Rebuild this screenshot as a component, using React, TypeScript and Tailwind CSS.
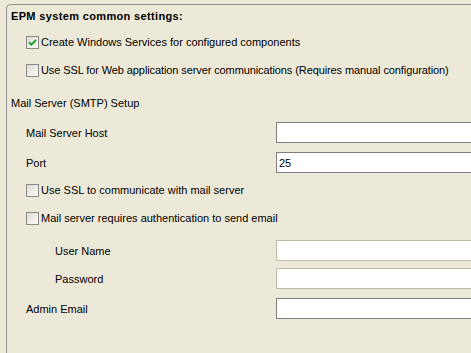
const font = "font-['Tahoma','Liberation_Sans','DejaVu_Sans',sans-serif] text-[11px] text-black";

function CheckBox({ checked = false }: { checked?: boolean }) {
  return (
    <span className="w-[13px] h-[13px] shrink-0 border border-[#8a8a88] bg-gradient-to-br from-[#dcdcd5] to-[#fbfbf9] flex items-center justify-center">
      {checked && (
        <svg width="9" height="9" viewBox="0 0 9 9">
          <path d="M1 4.2 L3.4 6.6 L8 2" fill="none" stroke="#21a121" strokeWidth="2" />
        </svg>
      )}
    </span>
  );
}

function CheckRow({
  label,
  checked,
  mt,
  tight = false,
}: {
  label: string;
  checked?: boolean;
  mt: string;
  tight?: boolean;
}) {
  return (
    <div className={`h-[21px] flex items-center gap-[2px] pl-[19px] ${mt}`}>
      <CheckBox checked={checked} />
      <span className={`whitespace-nowrap ${tight ? "tracking-[-0.1px]" : ""}`}>{label}</span>
    </div>
  );
}

function FieldRow({
  label,
  value = "",
  disabled = false,
  indent = "pl-[19px]",
  mt,
}: {
  label: string;
  value?: string;
  disabled?: boolean;
  indent?: string;
  mt: string;
}) {
  return (
    <div className={`h-[21px] flex items-center ${mt}`}>
      <div className={`w-[269px] shrink-0 pt-[1px] ${indent}`}>{label}</div>
      <div
        className={`h-[21px] flex-1 bg-white border flex items-center px-[2px] pt-[1px] ${
          disabled ? "border-[#bdbaa6]" : "border-[#7f7f7f]"
        }`}
      >
        {value}
      </div>
    </div>
  );
}

export default function App() {
  return (
    <div className={`w-[471px] h-[353px] bg-[#ece9d8] overflow-hidden pt-[4px] pl-[6px] ${font}`}>
      <div className="w-[520px] h-[400px] border-t border-l border-[#8e8f8f] rounded-tl-[5px] flex flex-col">
        <div className="h-[21px] mt-[1px] pl-[4px] flex items-center font-bold tracking-[0.35px]">
          EPM system common settings:
        </div>
        <CheckRow mt="mt-[5px]" checked label="Create Windows Services for configured components" />
        <CheckRow
          mt="mt-[7px]"
          tight
          label="Use SSL for Web application server communications (Requires manual configuration)"
        />
        <div className="h-[21px] mt-[12px] pl-[4px] flex items-center">Mail Server (SMTP) Setup</div>
        <FieldRow mt="mt-[8px]" label="Mail Server Host" />
        <FieldRow mt="mt-[9px]" label="Port" value="25" />
        <CheckRow mt="mt-[7px]" label="Use SSL to communicate with mail server" />
        <CheckRow mt="mt-[7px]" label="Mail server requires authentication to send email" />
        <FieldRow mt="mt-[11px]" label="User Name" indent="pl-[48px]" disabled />
        <FieldRow mt="mt-[7px]" label="Password" indent="pl-[48px]" disabled />
        <FieldRow mt="mt-[9px]" label="Admin Email" />
      </div>
    </div>
  );
}
